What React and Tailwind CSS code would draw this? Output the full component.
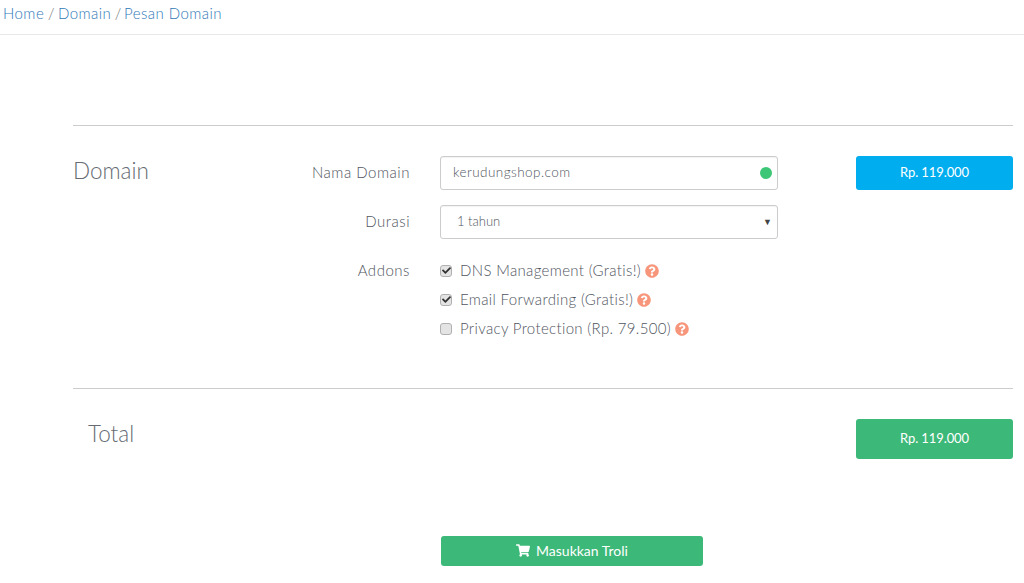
import { FaShoppingCart, FaQuestionCircle, FaCheck } from "react-icons/fa";

function Addon({ label, checked }) {
  return (
    <div className="flex items-center h-[29px]">
      <span className="w-[12px] h-[12px] rounded-[3px] border border-[#b0b0b0] bg-[#e4e4e4] flex items-center justify-center shrink-0 mr-[8px]">
        {checked && <FaCheck className="w-[9px] h-[9px] text-[#333333]" />}
      </span>
      <span className="text-[15px] font-light text-[#4f555e] tracking-[0.34px]">{label}</span>
      <FaQuestionCircle className="w-[14px] h-[14px] text-[#f7967a] ml-[4px]" />
    </div>
  );
}

export default function App() {
  return (
    <div className="w-[1024px] h-[583px] overflow-hidden bg-white font-['Lato','Liberation_Sans',sans-serif]">
      <div className="h-[35px] border-b border-[#e8e8e8] pl-[3px] pt-[4px] text-[15px] leading-[19px] text-[#2f78b8] font-light tracking-[0.45px]">
        <span>Home</span><span className="text-[#777777] tracking-[-0.3px]"> / </span><span>Domain</span><span className="text-[#777777] tracking-[-0.6px]"> / </span><span>Pesan Domain</span>
      </div>

      <div className="ml-[73px] mr-[11px] mt-[90px] border-t border-[#cccccc] h-[263px] flex pt-[30px]">
        <div className="w-[225px] text-[22.5px] leading-[30px] font-light text-[#666b73]">Domain</div>
        <div className="w-[112px] -mt-[1px] text-right text-[15px] font-light text-[#4f555e] tracking-[0.52px]">
          <div className="h-[34px] leading-[34px]">Nama Domain</div>
          <div className="h-[34px] leading-[34px] mt-[15px]">Durasi</div>
          <div className="h-[29px] leading-[29px] mt-[18px]">Addons</div>
        </div>
        <div className="w-[338px] ml-[30px]">
          <div className="h-[34px] border border-[#cccccc] rounded-[3px] flex items-center justify-between pl-[12px] pr-[5px] text-[13.5px] font-light text-[#4f555e] tracking-[0.45px] shadow-[inset_0_1px_1px_rgba(0,0,0,0.05)] pb-[2px]">
            <span>kerudungshop.com</span>
            <span className="w-[12px] h-[12px] rounded-full bg-[#3cc676] mt-[2px]" />
          </div>
          <div className="h-[34px] mt-[15px] border border-[#cccccc] rounded-[3px] flex items-center justify-between pl-[16px] pr-[5px] text-[13px] font-light text-[#4f555e] shadow-[inset_0_1px_1px_rgba(0,0,0,0.05)]">
            <span>1 tahun</span>
            <span className="text-[9px] text-[#444444]">▼</span>
          </div>
          <div className="mt-[17px]">
            <Addon label="DNS Management (Gratis!)" checked />
            <Addon label="Email Forwarding (Gratis!)" checked />
            <Addon label="Privacy Protection (Rp. 79.500)" />
          </div>
        </div>
        <div className="w-[157px] ml-[78px]">
          <div className="h-[34px] rounded-[3px] bg-[#00aeef] text-white text-[13px] tracking-[-0.1px] flex items-center justify-center">Rp. 119.000</div>
        </div>
      </div>

      <div className="ml-[73px] mr-[11px] border-t border-[#cccccc] h-[148px] pt-[30px] flex justify-between">
        <div className="pl-[15px] text-[22.5px] leading-[30px] font-light text-[#666b73]">Total</div>
        <div className="w-[157px] h-[40px] rounded-[3px] bg-[#3cb878] text-white text-[13px] tracking-[-0.1px] flex items-center justify-center">Rp. 119.000</div>
      </div>

      <div className="ml-[441px] w-[262px] h-[30px] rounded-[3px] bg-[#3cb878] text-white text-[14px] pb-[1px] flex items-center justify-center gap-[6px]">
        <FaShoppingCart className="w-[14px] h-[13px]" />
        <span>Masukkan Troli</span>
      </div>
    </div>
  );
}
